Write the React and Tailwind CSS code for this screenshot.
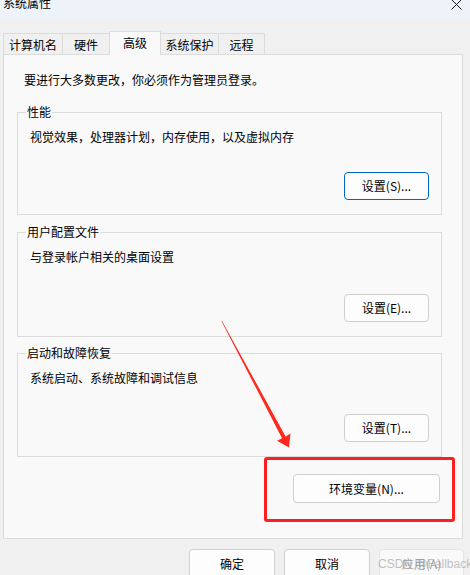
import React from "react"

const Btn = ({ children, focused, disabled, className = "" }) => (
	<button
		className={`h-[28px] rounded-[4px] border text-[12px] leading-none ${focused ? 'border-[#0067c0]' : 'border-[#d0d0d0]'} ${disabled ? 'bg-[#f9f9f9] border-[#e6e6e6] text-[#a2a2a2]' : 'bg-[#fdfdfd] text-black'} ${className}`}
	>
		{children}
	</button>
)

const Group = ({ title, desc, button, focused, h }) => (
	<div className={`relative flex flex-col border border-[#dcdcdc] ${h}`}>
		<span className="absolute -top-[9px] left-[8px] bg-[#f9f9f9] px-[1px] text-[12px] leading-[16px]">{title}</span>
		<p className="ml-[12px] mt-[16px] text-[12px] leading-[16px]">{desc}</p>
		<div className="mt-auto mb-[14px] mr-[12px] flex justify-end">
			<Btn focused={focused} className="w-[85px]">{button}</Btn>
		</div>
	</div>
)

const tabs = [
	{ label: '计算机名', w: 'w-[60px]' },
	{ label: '硬件', w: 'w-[48px]' },
	{ label: '高级', w: 'w-[52px]', active: true },
	{ label: '系统保护', w: 'w-[59px]' },
	{ label: '远程', w: 'w-[47px]' },
]

export default function App() {
	return (
		<div className="relative w-[470px] h-[575px] overflow-hidden bg-[#f0f0f0] text-black font-['Noto_Sans_CJK_SC','Noto_Sans',sans-serif]">
			{/* title bar */}
			<div className="relative h-[20px] bg-[#eef2f9]">
				<span className="absolute left-[3px] -top-[5px] text-[12px] leading-[16px]">系统属性</span>
				<svg className="absolute left-[451px] -top-[1px]" width="11" height="11" viewBox="0 0 11 11">
					<path d="M0.5 0.5 L10.5 10.5 M10.5 0.5 L0.5 10.5" stroke="#1a1a1a" strokeWidth="1" />
				</svg>
			</div>

			{/* tabs */}
			<div className="mt-[11px] ml-[3px] flex items-end">
				{tabs.map((t, i) => (
					<div
						key={t.label}
						className={`${t.w} ${i > 0 ? '-ml-px' : ''} flex justify-center border-x border-t border-[#dcdcdc] text-[12px] ${t.active ? 'relative z-10 -mb-px h-[24px] bg-[#f9f9f9] pt-[3px] leading-[16px]' : 'h-[21px] bg-[#f0f0f0] pt-[3px] leading-[16px]'}`}
					>
						{t.label}
					</div>
				))}
			</div>

			{/* panel */}
			<div className="ml-[3px] w-[460px] h-[485px] border border-[#dcdcdc] bg-[#f9f9f9] pl-[13px] pr-[20px]">
				<p className="mt-[17px] ml-[7px] text-[12px] leading-[16px]">要进行大多数更改，你必须作为管理员登录。</p>
				<div className="mt-[24px]">
					<Group title="性能" desc="视觉效果，处理器计划，内存使用，以及虚拟内存" button="设置(S)..." focused h="h-[103px]" />
				</div>
				<div className="mt-[17px]">
					<Group title="用户配置文件" desc="与登录帐户相关的桌面设置" button="设置(E)..." h="h-[105px]" />
				</div>
				<div className="mt-[16px]">
					<Group title="启动和故障恢复" desc="系统启动、系统故障和调试信息" button="设置(T)..." h="h-[104px]" />
				</div>
				<div className="mt-[17px] flex justify-end pr-[2px]">
					<Btn className="w-[147px] h-[29px]">环境变量(N)...</Btn>
				</div>
			</div>

			{/* footer buttons */}
			<div className="mt-[10px] ml-[189px] flex gap-[9px]">
				<Btn className="w-[86px] h-[30px]">确定</Btn>
				<Btn className="w-[86px] h-[30px]">取消</Btn>
				<Btn disabled className="w-[85px] h-[30px]">应用(A)</Btn>
			</div>

			{/* annotation: red box */}
			<div className="absolute left-[264px] top-[457px] w-[191px] h-[65px] rounded-[3px] border-[3px] border-[#fe2020]" />

			{/* annotation: arrow */}
			<svg className="absolute left-0 top-0 pointer-events-none" width="470" height="575">
				<polygon
					points="222,321 285.6,436.4 290.5,433.5 289,447.5 277,440.8 282,438.2 221.5,321.3"
					fill="#fe2a1e"
				/>
			</svg>

			{/* watermark */}
			<span className="absolute left-[378px] top-[556px] whitespace-nowrap text-[12px] leading-[16px] text-[#9a9a9a] opacity-60 font-['Liberation_Sans',sans-serif]">CSDN @Fallback</span>
		</div>
	)
}
